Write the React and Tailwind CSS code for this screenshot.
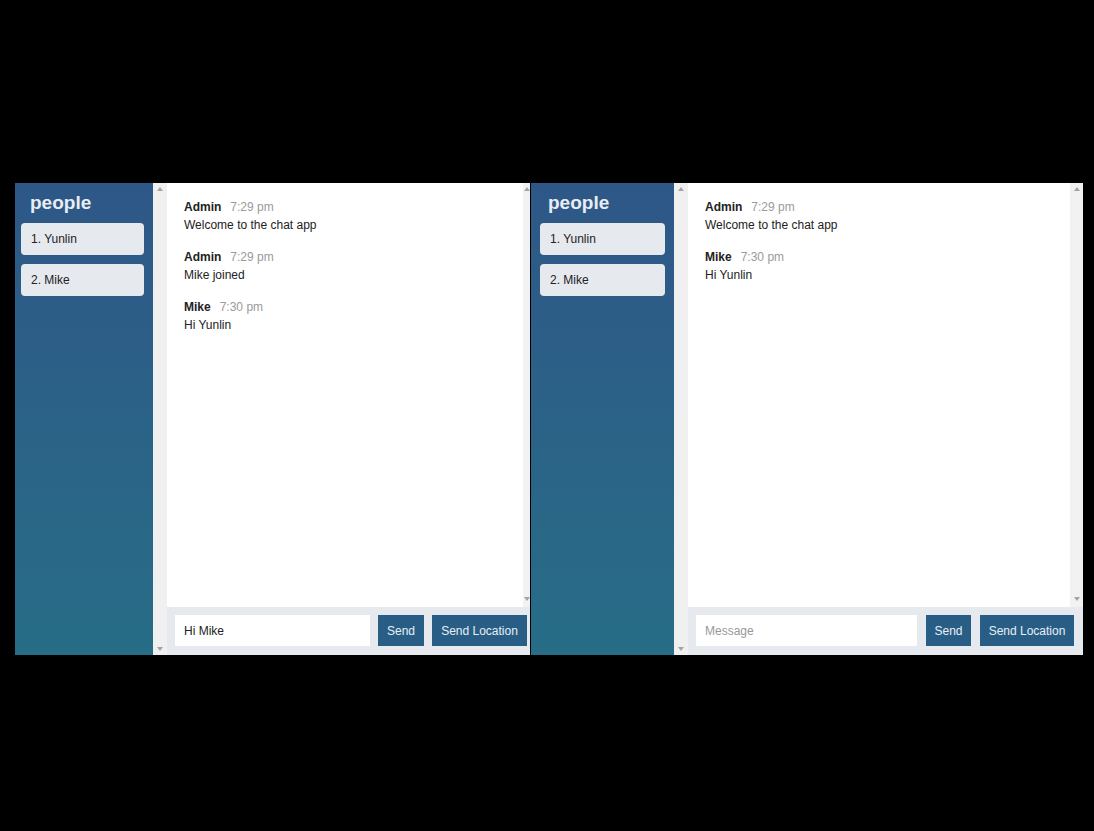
import React from "react";

const Up = () => (
  <svg width="6" height="4" viewBox="0 0 6 4"><path d="M0 4 L3 0 L6 4 Z" fill="#a3a3a3" /></svg>
);
const Down = () => (
  <svg width="6" height="4" viewBox="0 0 6 4"><path d="M0 0 L3 4 L6 0 Z" fill="#a3a3a3" /></svg>
);

function Sidebar({ w, px, headPl }) {
  return (
    <div className={`${w} ${px} h-full shrink-0 bg-gradient-to-b from-[#2e5787] to-[#276d87] pt-[9px]`}>
      <div className={`${headPl} text-[19px] font-bold leading-[22px] text-[#e8edf3]`}>people</div>
      <div className="mt-[9px] flex flex-col gap-[9px]">
        {["1. Yunlin", "2. Mike"].map((p) => (
          <div key={p} className="h-[32px] rounded-[4px] bg-[#e6e9ee] pl-[10px] text-[12px] leading-[32px] text-[#222]">
            {p}
          </div>
        ))}
      </div>
    </div>
  );
}

function Strip() {
  return (
    <div className="flex h-full w-[14px] shrink-0 flex-col items-center justify-between bg-[#f0f0f0] py-[4px]">
      <Up />
      <Down />
    </div>
  );
}

function Msg({ name, time, text }) {
  return (
    <div className="mb-[14px]">
      <div className="flex items-baseline gap-[9px] leading-[18px]">
        <span className="text-[12px] font-bold text-[#222]">{name}</span>
        <span className="text-[12px] text-[#9a9a9a]">{time}</span>
      </div>
      <div className="text-[12px] leading-[18px] text-[#222]">{text}</div>
    </div>
  );
}

function Window({ width, sideW, sidePx, headPl, sbW, msgs, inputVal, pr, gap, sendW, locW }) {
  return (
    <div className={`${width} flex h-full shrink-0 bg-white`}>
      <Sidebar w={sideW} px={sidePx} headPl={headPl} />
      <Strip />
      <div className="flex h-full min-w-0 flex-1 flex-col">
        <div className="flex min-h-0 flex-1">
          <div className="flex-1 pl-[17px] pt-[15px]">
            {msgs.map((m, i) => (
              <Msg key={i} {...m} />
            ))}
          </div>
          <div className={`${sbW} flex flex-col items-center justify-between bg-[#f2f2f2] pt-[4px] pb-[6px]`}>
            <Up />
            <Down />
          </div>
        </div>
        <div className={`flex h-[48px] shrink-0 items-start bg-[#e6e9ed] pl-[8px] pt-[8px] ${pr} ${gap}`}>
          <input
            readOnly
            value={inputVal}
            placeholder="Message"
            className="h-[31px] min-w-0 flex-1 bg-white px-[9px] text-[12px] text-[#222] outline-none placeholder:text-[#999]"
          />
          <button className={`h-[31px] ${sendW} bg-[#285e86] text-[12px] text-[#e9eef4]`}>Send</button>
          <button className={`h-[31px] ${locW} bg-[#285e86] text-[12px] text-[#e9eef4]`}>Send Location</button>
        </div>
      </div>
    </div>
  );
}

export default function App() {
  return (
    <div
      className="h-[831px] w-[1094px] overflow-hidden bg-black pt-[183px] pl-[15px]"
      style={{ fontFamily: '"Liberation Sans", Arial, sans-serif' }}
    >
      <div className="flex h-[472px] gap-[1px]">
        <Window
          width="w-[515px]"
          sideW="w-[138px]"
          sidePx="pl-[6px] pr-[9px]"
          headPl="pl-[9px]"
          sbW="w-[7px]"
          pr="pr-[3px]"
          gap="gap-[8px]"
          sendW="w-[46px]"
          locW="w-[95px]"
          inputVal="Hi Mike"
          msgs={[
            { name: "Admin", time: "7:29 pm", text: "Welcome to the chat app" },
            { name: "Admin", time: "7:29 pm", text: "Mike joined" },
            { name: "Mike", time: "7:30 pm", text: "Hi Yunlin" },
          ]}
        />
        <Window
          width="w-[552px]"
          sideW="w-[143px]"
          sidePx="px-[9px]"
          headPl="pl-[8px]"
          sbW="w-[13px]"
          pr="pr-[9px]"
          gap="gap-[9px]"
          sendW="w-[45px]"
          locW="w-[94px]"
          inputVal=""
          msgs={[
            { name: "Admin", time: "7:29 pm", text: "Welcome to the chat app" },
            { name: "Mike", time: "7:30 pm", text: "Hi Yunlin" },
          ]}
        />
      </div>
    </div>
  );
}
